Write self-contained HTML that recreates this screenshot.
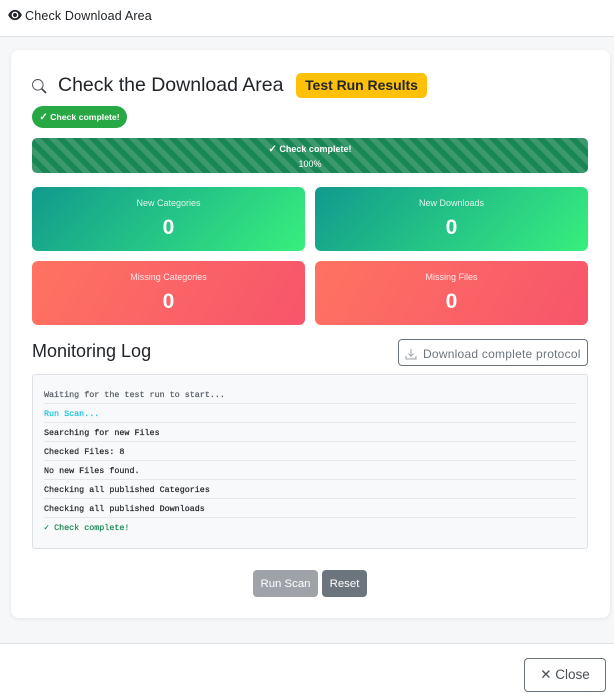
<!DOCTYPE html>
<html><head><meta charset="utf-8"><style>
*{box-sizing:border-box}
html,body{margin:0;padding:0}
body{width:614px;height:697px;position:relative;overflow:hidden;background:#f6f7f9;font-family:"Liberation Sans",sans-serif;color:#212529}
.a{position:absolute;white-space:nowrap}
.c{text-align:center}
.stat{position:absolute;width:273px;height:64px;border-radius:6px;color:#fff;text-align:center}
.stat .l{position:absolute;left:0;right:0;top:10px;font-size:9px;line-height:12px;opacity:.85}
.stat .n{position:absolute;left:0;right:0;top:27px;font-size:21px;line-height:27px;font-weight:700}
.g{background:linear-gradient(135deg,#11998e,#38ef7d)}
.r{background:linear-gradient(120deg,#ff7361,#f7556b)}
.ll{position:absolute;left:44px;width:532px;height:19px;font-family:"Liberation Mono",monospace;font-size:8.4px;line-height:20px;white-space:nowrap;border-bottom:1px solid #e5e7ea;-webkit-text-stroke:.2px currentColor}
</style></head><body>
<div class="a" style="left:0;top:0;width:614px;height:37px;background:#fff;border-bottom:1px solid #dee2e6"></div>
<svg class="a" style="left:8px;top:9px" width="14" height="12" viewBox="0 0 16 14"><path fill="#212529" d="M8 1C4.400 1 1.600 3.600 0 7c1.600 3.400 4.400 6 8 6s6.400-2.600 8-6c-1.600-3.400-4.400-6-8-6zm0 10a4 4 0 1 1 0-8 4 4 0 0 1 0 8z"/><circle cx="8" cy="7" r="2.300" fill="#212529"/></svg>
<div class="a" style="left:25px;top:8px;font-size:12.500px;line-height:16px;letter-spacing:.17px">Check Download Area</div>

<div class="a" style="left:11px;top:50px;width:599px;height:568px;background:#fff;border-radius:8px;box-shadow:0 1px 4px rgba(0,0,0,.08)"></div>

<svg class="a" style="left:31px;top:78px" width="16" height="16" viewBox="0 0 16 16"><circle cx="6.800" cy="6.800" r="5.300" fill="none" stroke="#4a4f54" stroke-width=".9"/><path d="M10.800 10.800L15 15" stroke="#3a3f44" stroke-width="1.700"/></svg>
<div class="a" style="left:58px;top:72px;font-size:19.500px;line-height:26px">Check the Download Area</div>
<div class="a c" style="left:296px;top:73px;width:131px;height:25px;background:#ffc107;border-radius:5px;font-size:14px;font-weight:700;line-height:25px;letter-spacing:-.03px">Test Run Results</div>

<div class="a c" style="left:32px;top:106px;width:95px;height:22px;background:#28a745;border-radius:11px;color:#fff;font-size:8.700px;font-weight:700;line-height:22px"><span style="font-size:10px">✓</span> Check complete!</div>

<div class="a c" style="left:32px;top:138px;width:556px;height:35px;border-radius:5px;color:#fff;font-size:9px;line-height:14px;padding-top:4px;background-color:#198754;background-image:linear-gradient(45deg,rgba(255,255,255,.15) 25%,transparent 25%,transparent 50%,rgba(255,255,255,.15) 50%,rgba(255,255,255,.15) 75%,transparent 75%,transparent);background-size:16px 16px"><b><span style="font-size:10px">✓</span> Check complete!</b><br>100%</div>

<div class="stat g" style="left:32px;top:187px"><div class="l">New Categories</div><div class="n">0</div></div>
<div class="stat g" style="left:315px;top:187px"><div class="l">New Downloads</div><div class="n">0</div></div>
<div class="stat r" style="left:32px;top:261px"><div class="l">Missing Categories</div><div class="n">0</div></div>
<div class="stat r" style="left:315px;top:261px"><div class="l">Missing Files</div><div class="n">0</div></div>

<div class="a" style="left:32px;top:340px;font-size:18px;line-height:22px">Monitoring Log</div>
<div class="a" style="left:398px;top:339px;width:190px;height:27px;border:1px solid #6c757d;border-radius:4px;background:#fff"></div>
<svg class="a" style="left:405px;top:348px" width="12" height="12" viewBox="0 0 12 12"><path d="M6 1v7M3.500 5.700L6 8.200l2.500-2.500M1 8v3h10V8" fill="none" stroke="#9aa0a6" stroke-width="1"/></svg>
<div class="a" style="left:423px;top:346px;font-size:12px;line-height:16px;color:#6c757d;letter-spacing:.24px">Download complete protocol</div>

<div class="a" style="left:32px;top:374px;width:556px;height:175px;background:#f8f9fa;border:1px solid #dee2e6;border-radius:3px"></div>
<div class="ll" style="top:385px;color:#555c63">Waiting for the test run to start...</div>
<div class="ll" style="top:404px;color:#17c1de">Run Scan...</div>
<div class="ll" style="top:423px">Searching for new Files</div>
<div class="ll" style="top:442px">Checked Files: 8</div>
<div class="ll" style="top:461px">No new Files found.</div>
<div class="ll" style="top:480px">Checking all published Categories</div>
<div class="ll" style="top:499px">Checking all published Downloads</div>
<div class="ll" style="top:518px;color:#198754;border-bottom:0">✓ Check complete!</div>

<div class="a c" style="left:253px;top:570px;width:65px;height:27px;background:#9fa3a9;border-radius:4px;color:#fff;font-size:11.400px;line-height:28px">Run Scan</div>
<div class="a c" style="left:322px;top:570px;width:45px;height:27px;background:#6c757d;border-radius:4px;color:#fff;font-size:11.400px;line-height:28px">Reset</div>

<div class="a" style="left:0;top:643px;width:614px;height:54px;background:#fff;border-top:1px solid #dee2e6"></div>
<div class="a c" style="left:524px;top:658px;width:82px;height:34px;background:#fff;border:1px solid #6c757d;border-radius:4px;color:#495057;font-size:13.500px;line-height:32px">✕ Close</div>
</body></html>
